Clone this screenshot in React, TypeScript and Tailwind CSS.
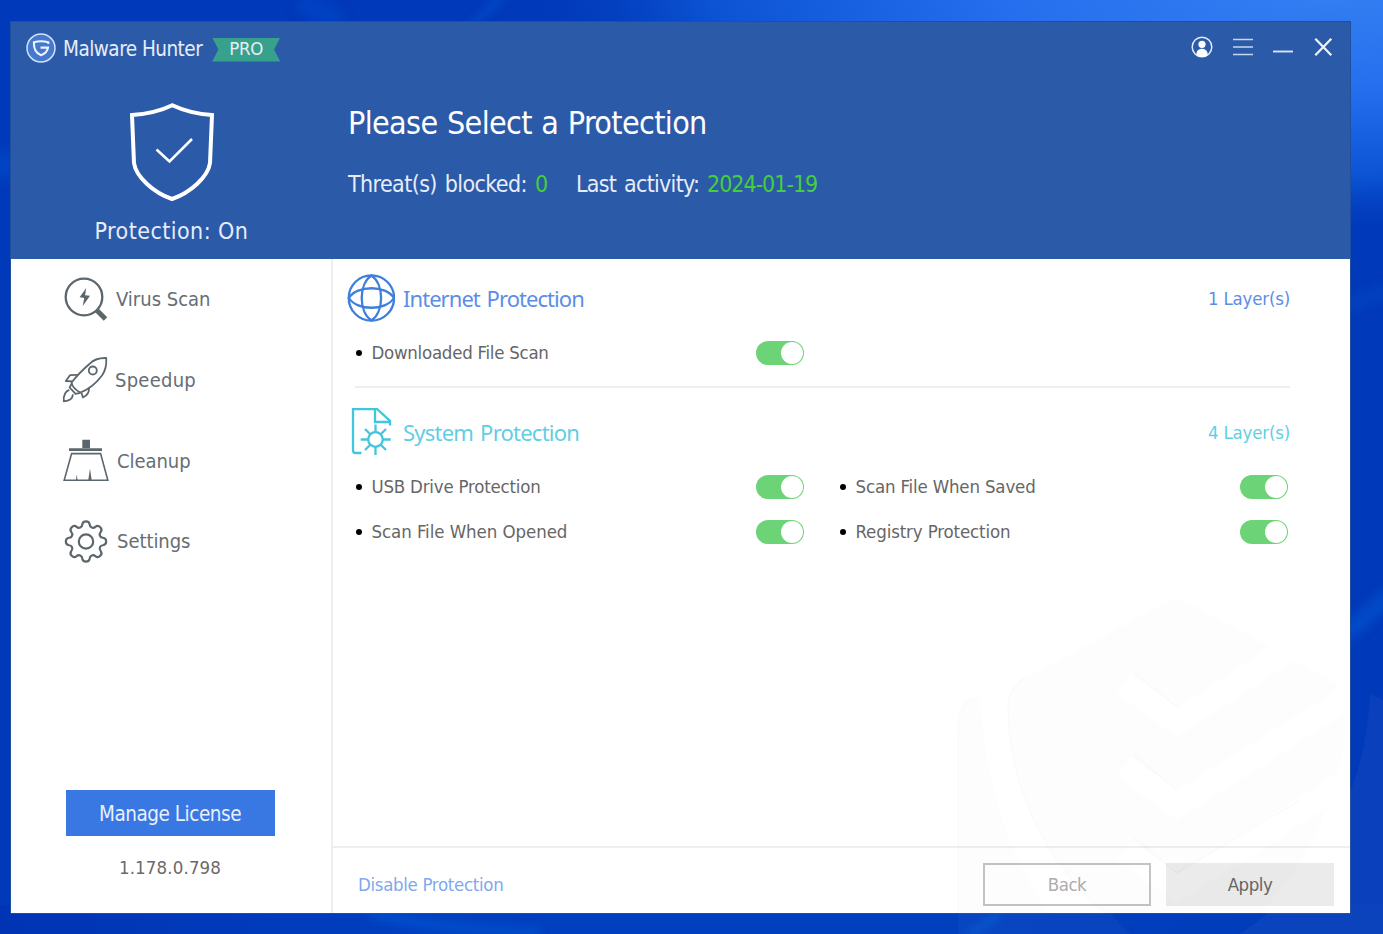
import React, { useState } from "react";

interface IconProps {
  className?: string;
}

// Builds an eight-tooth rounded gear outline around (cx, cy)
const gearPath = (cx: number, cy: number): string => {
  const point = (deg: number) => {
    const rad = ((deg - 90) * Math.PI) / 180;
    return `${(cx + 17.3 * Math.cos(rad)).toFixed(2)} ${(cy + 17.3 * Math.sin(rad)).toFixed(2)}`;
  };
  let d = `M${point(-12.5)}`;
  for (let i = 0; i < 8; i++) {
    d += `A3.77 3.77 0 0 1 ${point(i * 45 + 12.5)}`;
    d += `A3.3 3.3 0 0 0 ${point(i * 45 + 32.5)}`;
  }
  return d + "Z";
};

const ScanIcon: React.FC<IconProps> = ({ className }) => (
  <svg viewBox="0 0 48 48" fill="none" className={className}>
    <circle cx="22" cy="22" r="18.3" stroke="#5c676d" strokeWidth="2.3" />
    <path d="M34.500 35l9 9" stroke="#5c676d" strokeWidth="5" />
    <path d="M24.200 13l-6.600 9.300 4.600.6-1.400 8.100 7.200-10.200-4.900-.6z" fill="#5c676d" />
  </svg>
);

const RocketIcon: React.FC<IconProps> = ({ className }) => (
  <svg viewBox="0 0 48 48" fill="none" stroke="#5c676d" strokeWidth="1.8" strokeLinejoin="round" className={className}>
    <path d="M44.2 2C38 1.8 31.5 3.6 27.4 8 20.500 14 14.500 20 9.600 26.500Q10 32 18.400 36.500C27 33.300 34.500 26.700 40 19.500 43.500 14.500 44.700 8 44.200 2Z" />
    <circle cx="30.800" cy="14.500" r="4" />
    <path d="M15.800 18.800L8 19.200 3.800 25 10.800 25.300" />
    <path d="M27 31.800C27.300 36.500 25.500 39.500 21 41.500L19.300 36.500" />
    <path d="M9.800 27.500L7.600 31.500 13.600 37.800 18.200 36.800" />
    <path d="M7.300 33.800C2.800 35.500 1.300 39.500 1.800 45.300 6.500 45 10.500 43 11 38.300" />
  </svg>
);

const BroomIcon: React.FC<IconProps> = ({ className }) => (
  <svg viewBox="0 0 48 48" fill="none" className={className}>
    <path d="M20.300 2.700h7.700v8.300h-7.700zM7 11.300h33v2.700H7z" fill="#5c676d" />
    <path d="M9.600 16.600h29l7.200 26.600H2.200z" stroke="#5c676d" strokeWidth="1.600" />
    <path d="M28 31.500l-1.800 12h3.500zM14.800 37.500l-1 6h1.800z" fill="#5c676d" />
  </svg>
);

const GearIcon: React.FC<IconProps> = ({ className }) => (
  <svg viewBox="0 0 48 48" fill="none" stroke="#5c676d" strokeWidth="2.200" className={className}>
    <path d={gearPath(24, 24.500)} />
    <circle cx="24" cy="24.500" r="7.200" />
  </svg>
);

const GlobeIcon: React.FC<IconProps> = ({ className }) => (
  <svg viewBox="0 0 48 48" fill="none" stroke="#3f7fdc" strokeWidth="2.300" className={className}>
    <circle cx="24.400" cy="24" r="22.700" />
    <path d="M24.400 1.500C11.500 10 11.500 38 24.400 46.500C37.300 38 37.300 10 24.400 1.500Z" />
    <path d="M1.900 24C10 11 38.800 11 46.900 24C38.800 37 10 37 1.900 24Z" />
  </svg>
);

const SystemIcon: React.FC<IconProps> = ({ className }) => (
  <svg viewBox="0 0 48 48" fill="none" stroke="#41c7dd" strokeWidth="2.300" className={className}>
    <path d="M14.500 45H8.500Q6 45 6 42.500V1H30L43 12.800V17.500" />
    <path d="M28 1V14H43" />
    <circle cx="28.500" cy="31.500" r="7.300" />
    <path d="M28.500 16.500v7.500M28.500 39v8M13.700 31.500h7.500M35.700 31.500h8M18 21l5.300 5.300M39 21l-5.300 5.300M18 42l5.300-5.300M39 42l-5.300-5.300" />
  </svg>
);

const Logo: React.FC<IconProps> = ({ className }) => (
  <svg viewBox="0 0 30 30" fill="none" className={className}>
    <circle cx="15" cy="15" r="14" fill="#4479cf" stroke="#d3e0f5" strokeWidth="1.500" />
    <path
      d="M22.300 11V9.300Q15 7.300 7.900 9.300C7.700 15.500 9.800 20.300 15 22.200C19.500 20.500 21.500 18 22 14.600H14.500"
      stroke="#eef4fd"
      strokeWidth="2.100"
    />
  </svg>
);

const navItems = [
  { label: "Virus Scan", icon: ScanIcon, text: "ml-[6px]" },
  { label: "Speedup", icon: RocketIcon, text: "ml-[5px] tracking-[0.250px]" },
  { label: "Cleanup", icon: BroomIcon, text: "ml-[7px] tracking-[-0.050px]" },
  { label: "Settings", icon: GearIcon, text: "ml-[7px] tracking-[-0.050px]" },
];

const internetItems = [{ label: "Downloaded File Scan", text: "tracking-[-0.260px]" }];

const systemItems = [
  { label: "USB Drive Protection", text: "tracking-[-0.210px]" },
  { label: "Scan File When Saved", text: "tracking-[-0.160px]" },
  { label: "Scan File When Opened", text: "tracking-[-0.060px]" },
  { label: "Registry Protection", text: "tracking-[-0.130px]" },
];

const Toggle: React.FC = () => {
  const [on, setOn] = useState(true);

  return (
    <button
      role="switch"
      aria-checked={on}
      onClick={() => setOn(!on)}
      className={`flex h-6 w-12 items-center rounded-full p-px ${on ? "justify-end bg-[#6dd377]" : "bg-gray-300"}`}
    >
      <span className="h-[22px] w-[22px] rounded-full bg-white" />
    </button>
  );
};

const ProtectionItem: React.FC<{ label: string; text: string }> = ({ label, text }) => (
  <div className="flex h-[45px] items-center">
    <span className="ml-px h-[6px] w-[6px] rounded-full bg-black" />
    <span className={`mt-px ml-[9.500px] flex-1 text-[18.5px] text-[#666] ${text}`}>{label}</span>
    <Toggle />
  </div>
);

// Desktop wallpaper behind the window
const Wallpaper: React.FC = () => (
  <svg viewBox="0 0 1383 934" className="absolute inset-0 h-full w-full">
    <defs>
      <radialGradient id="glow" gradientUnits="userSpaceOnUse" cx="0" cy="0" r="1" gradientTransform="translate(1330 -10) scale(830 250)">
        <stop offset="0" stopColor="#347ff2" />
        <stop offset="0.400" stopColor="#256fee" />
        <stop offset="0.750" stopColor="#0b53d3" />
        <stop offset="1" stopColor="#0039ba" stopOpacity="0" />
      </radialGradient>
      <linearGradient id="floor" x1="0" x2="1">
        <stop offset="0" stopColor="#0034b4" />
        <stop offset="0.300" stopColor="#003fbf" />
        <stop offset="0.700" stopColor="#003fbe" />
        <stop offset="1" stopColor="#003cba" />
      </linearGradient>
      <filter id="soft" filterUnits="userSpaceOnUse" x="-40" y="-40" width="1463" height="1014">
        <feGaussianBlur stdDeviation="5" />
      </filter>
    </defs>
    <rect width="1383" height="934" fill="#0039b9" />
    <rect y="905" width="1383" height="29" fill="url(#floor)" />
    <rect width="1383" height="300" fill="url(#glow)" />
    <g filter="url(#soft)">
      <path d="M300 0L340 24" stroke="#0040c2" strokeWidth="24" />
      <path d="M505 -5L470 26" stroke="#0a4fcf" strokeWidth="5" />
      <path d="M-5 175L14 155" stroke="#0043c3" strokeWidth="24" />
      <path d="M1345 635L1390 595" stroke="#0048c8" strokeWidth="18" />
      <path d="M1345 306L1390 290" stroke="#003fbf" strokeWidth="16" />
      <path d="M370 913Q440 930 540 932" stroke="#0a54d0" strokeWidth="6" fill="none" />
      <path d="M968 936L1000 914" stroke="#0a5bd8" strokeWidth="5" />
    </g>
  </svg>
);

// Faint shield mark laid over the lower right corner
const Watermark: React.FC = () => (
  <svg viewBox="0 0 1383 934" fill="none" className="pointer-events-none absolute inset-0 h-full w-full">
    <defs>
      <mask id="checks">
        <rect width="1383" height="934" fill="#fff" />
        <g stroke="#000" strokeWidth="24">
          <path d="M1124 684L1177 722L1290 649" />
          <path d="M1124 767L1177 805L1360 690" />
          <path d="M1124 850L1177 888L1360 773" />
        </g>
      </mask>
      <clipPath id="window">
        <rect x="11" y="22" width="1339" height="891" />
      </clipPath>
    </defs>
    <g clipPath="url(#window)" fill="#000" fillOpacity="0.009">
      <path
        mask="url(#checks)"
        d="M1167 602Q1178 596 1189 602L1337 684L1346 725C1342 800 1300 880 1240 934H1130C1055 880 1010 800 1008 708Q1008 688 1025 678Z"
      />
      <path d="M958 934V730Q958 704 980 694C985 780 1010 870 1065 934Z" />
    </g>
    <g stroke="#000" strokeOpacity="0.020" strokeWidth="1.500">
      <path d="M1130 934C1055 880 1010 800 1008 708Q1008 688 1025 678" />
      <path d="M958 934V730Q958 706 972 698" />
      <path d="M1133 671L1177 707M1133 754L1177 790M1133 837L1177 873L1300 800" />
    </g>
    <path d="M1370 694C1366 790 1320 880 1240 934H1383V700Z" fill="#fff" fillOpacity="0.040" />
    <path d="M958 934V913H1110L1130 934Z" fill="#fff" fillOpacity="0.030" />
  </svg>
);

const App: React.FC = () => {
  return (
    <div className="relative h-[934px] w-[1383px] overflow-hidden font-['DejaVu_Sans_Condensed','DejaVu_Sans','Noto_Sans',sans-serif]">
      <Wallpaper />

      <div className="relative pt-[22px] pl-[11px]">
        <div className="flex h-[891px] w-[1339px] flex-col bg-white outline-1 outline-[#1f4f9f]">
          {/* Header */}
          <header className="h-[237px] bg-[#2b5aa9] text-[#e6edf8]">
            <div className="flex h-[52px] items-center pr-[17px] pl-[15px]">
              <Logo className="h-[30px] w-[30px]" />
              <span className="mt-[3px] ml-[7px] text-[20.5px] tracking-[-0.520px]">Malware Hunter</span>
              <span className="mt-[3px] ml-[10px] flex h-6 w-[68px] items-center justify-center bg-[#37a18c] pb-px text-[18.5px] tracking-[-0.200px] [clip-path:polygon(0_0,100%_0,91%_50%,100%_100%,0_100%,9%_50%)]">
                PRO
              </span>
              <div className="ml-auto flex items-center gap-5 pb-[3px]">
                <svg viewBox="0 0 22 22" fill="none" className="h-[22px] w-[22px]">
                  <circle cx="11" cy="11" r="9.800" stroke="#e3ebf7" strokeWidth="1.500" />
                  <circle cx="11" cy="8.300" r="3.600" fill="#fff" />
                  <path d="M5.500 19.200C4.800 15.500 7.500 12.800 11 12.800S17.200 15.500 16.500 19.200Q11 23 5.500 19.200Z" fill="#fff" />
                </svg>
                <svg viewBox="0 0 20 20" stroke="#c9d6ec" strokeWidth="1.700" className="h-5 w-5">
                  <path d="M0 2.500h20M0 10h20M0 17.500h20" />
                </svg>
                <svg viewBox="0 0 20 20" stroke="#dbe5f4" strokeWidth="1.900" className="h-5 w-5">
                  <path d="M0 14.500h20" />
                </svg>
                <svg viewBox="0 0 20 20" stroke="#edf2fa" strokeWidth="2.300" className="h-5 w-5">
                  <path d="M2.300 1.800l16 16.400M18.300 1.800l-16 16.400" />
                </svg>
              </div>
            </div>

            <div className="flex">
              <div className="flex w-[321px] flex-col items-center pt-[27px]">
                <svg viewBox="0 0 88 102" fill="none" stroke="#fff" className="h-[102px] w-[88px]">
                  <path d="M44.300 4.200Q62 12.500 84 14L82 62C80 76 62 92 44 98C26 92 8 76 6 62L4 14Q27 12.500 44.300 4.200Z" strokeWidth="4" />
                  <path d="M28.500 48.500L41.500 60.500L64 38" strokeWidth="2.600" />
                </svg>
                <div className="mt-[12px] text-[23px] leading-8 tracking-[0.450px]">Protection: On</div>
              </div>
              <div className="pt-[26px] pl-4">
                <h1 className="text-[32px] leading-[46px] tracking-[-0.660px] text-white [word-spacing:1px]">
                  Please Select a Protection
                </h1>
                <div className="mt-[22px] flex text-[23px] leading-8">
                  <span className="w-[187px] tracking-[-0.600px] [word-spacing:2px]">Threat(s) blocked:</span>
                  <span className="w-[41px] text-[#45cf3a]">0</span>
                  <span className="w-[131px] tracking-[-0.720px] [word-spacing:2px]">Last activity:</span>
                  <span className="tracking-[-1px] text-[#45cf3a]">2024-01-19</span>
                </div>
              </div>
            </div>
          </header>

          {/* Body */}
          <div className="flex flex-1">
            <aside className="flex w-[322px] flex-col border-r-2 border-[#eeeeee]">
              <nav className="pl-[51px]">
                {navItems.map(({ label, icon: Icon, text }) => (
                  <button key={label} className="flex h-[80.7px] w-full items-center text-[20px] text-[#666e74]">
                    <Icon className="h-12 w-12" />
                    <span className={text}>{label}</span>
                  </button>
                ))}
              </nav>
              <div className="mt-auto flex flex-col items-center pr-[2px] pb-[29px]">
                <button className="h-[46px] w-[209px] bg-[#3977e3] pt-[2px] text-[20.5px] tracking-[-0.470px] text-[#e8f0fd]">
                  Manage License
                </button>
                <span className="mt-[16px] text-[18.5px] leading-8 tracking-[0.150px] text-[#6a6a6a]">1.178.0.798</span>
              </div>
            </aside>

            <main className="flex flex-1 flex-col">
              <div className="flex flex-1 flex-col pt-[15px] pr-[60px] pl-[14px]">
                <div className="flex h-12 items-center">
                  <GlobeIcon className="h-12 w-12" />
                  <h2 className="ml-2 flex-1 font-['Noto_Sans'] text-[22px] tracking-[-0.950px] text-[#5b8ee6] [word-spacing:2px]">
                    Internet Protection
                  </h2>
                  <span className="pt-px text-[18.5px] tracking-[-0.200px] text-[#5b8ee6]">1 Layer(s)</span>
                </div>
                <div className="mt-[8px] ml-2 grid grid-cols-[449px_449px] gap-x-[35px]">
                  {internetItems.map((item) => (
                    <ProtectionItem key={item.label} {...item} />
                  ))}
                </div>

                <div className="mt-[11px] ml-2 h-[2px] bg-[#eeeeee]" />

                <div className="mt-[20px] flex h-12 items-center">
                  <SystemIcon className="h-12 w-12" />
                  <h2 className="ml-2 flex-1 font-['Noto_Sans'] text-[22px] tracking-[-0.770px] text-[#5fcfe2] [word-spacing:2px]">
                    System Protection
                  </h2>
                  <span className="pt-px text-[18.5px] tracking-[-0.200px] text-[#5fcfe2]">4 Layer(s)</span>
                </div>
                <div className="mt-[8px] ml-2 grid grid-cols-[449px_449px] gap-x-[35px]">
                  {systemItems.map((item) => (
                    <ProtectionItem key={item.label} {...item} />
                  ))}
                </div>
              </div>

              <footer className="flex h-[67px] items-center gap-[15px] border-t-2 border-[#eeeeee] pt-[9px] pr-[16px] pb-px pl-[25px] text-[18.5px]">
                <a href="#" className="mr-auto tracking-[-0.320px] text-[#7fa8ee]">
                  Disable Protection
                </a>
                <button className="h-[43px] w-[168px] border-2 border-[#c4c4c4] tracking-[-0.500px] text-[#adadad]">Back</button>
                <button className="h-[43px] w-[168px] bg-[#ebebeb] tracking-[-0.450px] text-[#666]">Apply</button>
              </footer>
            </main>
          </div>
        </div>
      </div>

      <Watermark />
    </div>
  );
};

export default App;
